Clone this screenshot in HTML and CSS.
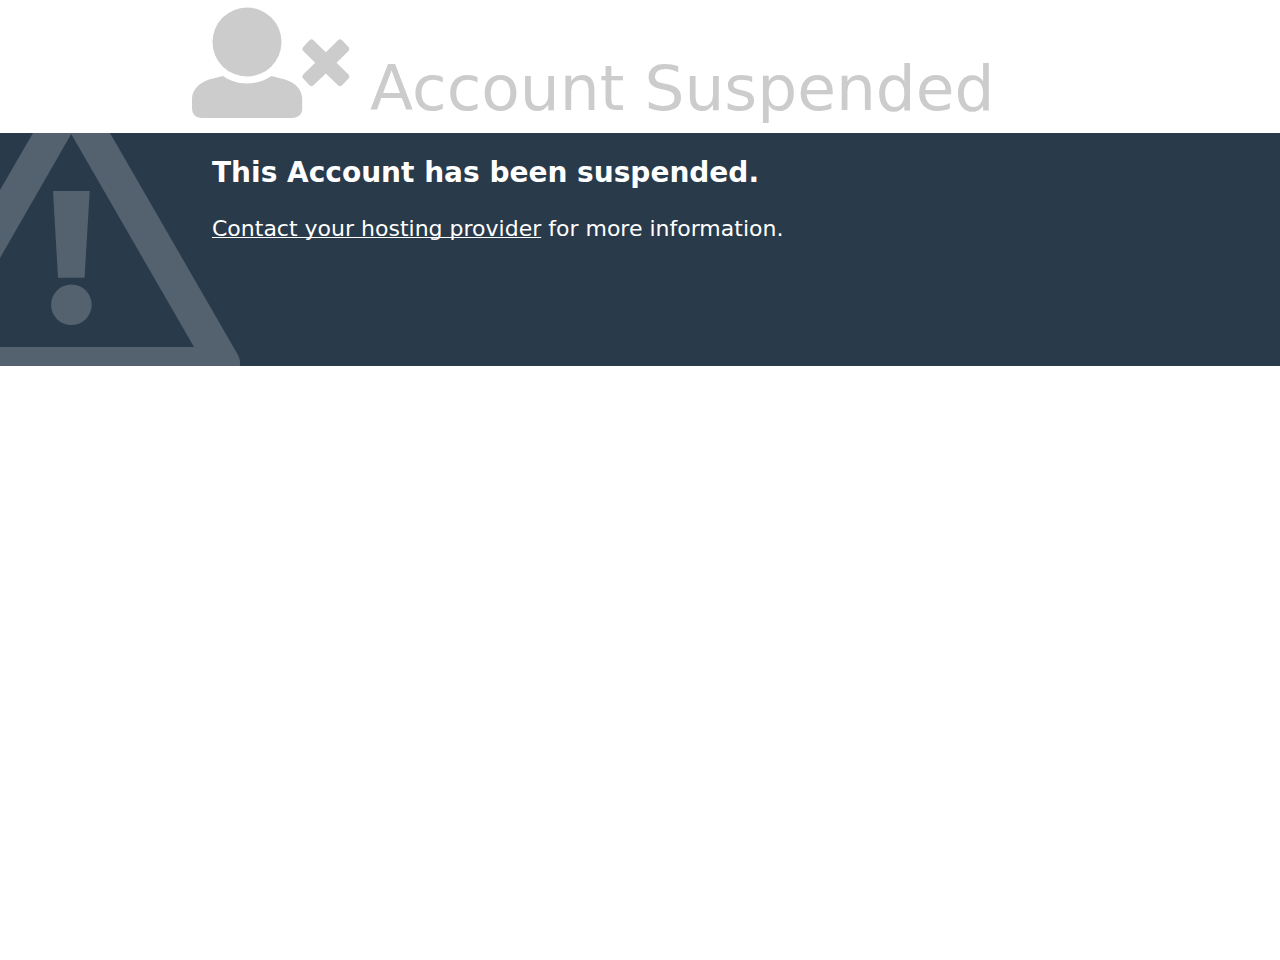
FILE: index.html
```html
<!DOCTYPE html>
<html lang="en">
<head>
<meta charset="utf-8">
<meta name="viewport" content="width=device-width, initial-scale=1">
<title>Account Suspended</title>
<link rel="stylesheet" href="styles.css">
</head>
<body>
<header class="status">
  <svg class="status-icon" viewBox="0 0 158 110" aria-hidden="true">
    <circle cx="55" cy="34" r="34.5"/>
    <path d="M31 68C38 72.800 46 75.500 55 75.500S72 72.800 79.500 68L93 71.500C104 75 110.200 82 110.200 91V101C110 106.500 106 110 100 110H10C4 110 0 106.500 0 100V91C0 82 7 75 17 71.500Z"/>
    <path d="M117.500 32.200Q119.500 30.200 121.500 32.200L133.800 44.200L146 32.200Q148 30.200 150 32.200L156.500 39Q158.300 41 156.500 43L144.500 54.800L156.500 66.500Q158.300 68.500 156.500 70.500L150 77.200Q148 79.200 146 77.200L133.800 65.500L121.500 77.200Q119.500 79.200 117.500 77.200L111.200 70.500Q109.400 68.500 111.200 66.500L123.200 54.800L111.200 43Q109.400 41 111.200 39Z"/>
  </svg>
  <h1 class="status-title">Account Suspended</h1>
</header>
<main class="info">
  <svg class="info-icon" viewBox="0 0 240 233" aria-hidden="true">
    <path fill-rule="evenodd" d="M33 0H110L238 222Q240 226 240 229V233H0V214H194L71.200 1L0 125V57Z"/>
    <path d="M53 58H89.700L84.600 144.700H58Z"/>
    <circle cx="71.400" cy="171.800" r="20.300"/>
  </svg>
  <div class="info-text">
    <h2 class="info-heading">This Account has been suspended.</h2>
    <p class="info-message"><a class="info-link" href="#">Contact your hosting provider</a> for more information.</p>
  </div>
</main>
</body>
</html>
```

FILE: styles.css
```css
body {
  margin: 0;
  background: #fff;
  color: #ccc;
  font-family: "DejaVu Sans", Verdana, sans-serif;
}

.status {
  display: flex;
  align-items: flex-end;
  gap: 20px;
  padding: 8px 15% 13px;
}

.status-icon {
  flex: none;
  width: 158px;
  height: 110px;
  margin-bottom: 2px;
  overflow: visible;
  fill: #ccc;
}

.status-title {
  margin: 0;
  font-size: 63px;
  font-weight: 400;
  line-height: 1;
}

.info {
  display: grid;
  background: #293a4a;
  color: #fff;
}

.info-icon,
.info-text {
  grid-area: 1 / 1;
}

.info-icon {
  width: 240px;
  height: 233px;
  fill: #54626f;
}

.info-text {
  padding: 23px 15% 23px calc(15% + 20px);
}

.info-heading {
  margin: 0 0 27px;
  font-size: 28px;
  line-height: 33px;
}

.info-message {
  margin: 0;
  font-size: 22px;
  line-height: 26px;
}

.info-link {
  color: inherit;
  text-decoration-thickness: 1px;
  text-underline-offset: 1px;
  text-decoration-skip-ink: none;
}
```
